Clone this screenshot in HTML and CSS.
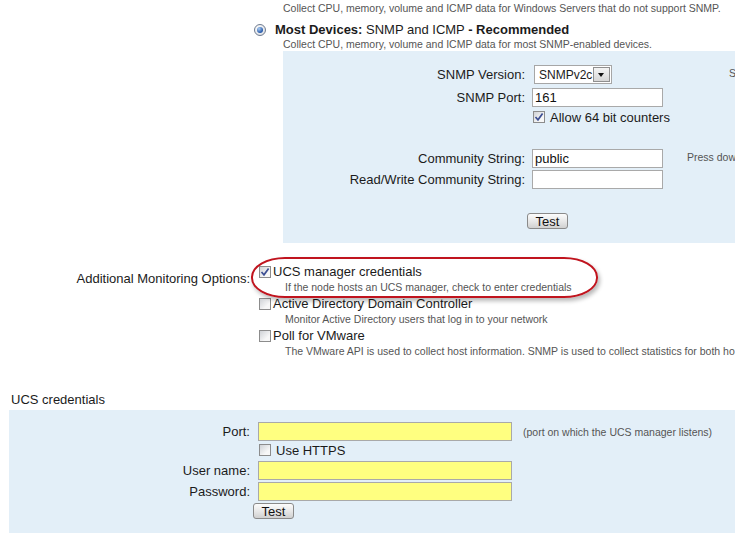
FILE: index.html
```html
<!DOCTYPE html>
<html lang="en">
<head>
  <meta charset="UTF-8">
  <title>Add Node - Polling Method</title>
  <link rel="stylesheet" href="styles.css">
</head>
<body>
  <div class="method">
    <p class="hint top">Collect CPU, memory, volume and ICMP data for Windows Servers that do not support SNMP.</p>
    <div class="radio-row">
      <span class="radio on"></span>
      <span><b>Most Devices:</b> SNMP and ICMP <b>- Recommended</b></span>
    </div>
    <p class="hint sub">Collect CPU, memory, volume and ICMP data for most SNMP-enabled devices.</p>

    <div class="panel snmp">
      <div class="row">
        <span class="lbl">SNMP Version:</span>
        <span class="field">
          <span class="select"><span class="select-text">SNMPv2c</span><span class="select-btn"><i></i></span></span>
        </span>
        <span class="note note-s">S</span>
      </div>
      <div class="row gap4">
        <span class="lbl">SNMP Port:</span>
        <span class="field"><input class="txt" type="text" value="161"></span>
      </div>
      <div class="row gap3 short">
        <span class="lbl"></span>
        <span class="field check-line"><span class="cb on"><svg viewBox="0 0 12 12"><path d="M2.5 6 L5 8.8 L9.6 2.6"/></svg></span>Allow 64 bit counters</span>
      </div>
      <div class="row gap-big">
        <span class="lbl">Community String:</span>
        <span class="field"><input class="txt" type="text" value="public"></span>
        <span class="note note-press">Press dow</span>
      </div>
      <div class="row gap2">
        <span class="lbl">Read/Write Community String:</span>
        <span class="field"><input class="txt" type="text" value=""></span>
      </div>
      <div class="row gap-btn btn-row">
        <span class="lbl"></span>
        <span class="field"><button class="btn shift">Test</button></span>
      </div>
    </div>
  </div>

  <div class="extra">
    <div class="extra-label">Additional Monitoring Options:</div>
    <div class="extra-list">
      <div class="opt"><span class="cb on"><svg viewBox="0 0 12 12"><path d="M2.5 6 L5 8.8 L9.6 2.6"/></svg></span>UCS manager credentials</div>
      <p class="hint opt-hint">If the node hosts an UCS manager, check to enter credentials</p>
      <div class="opt"><span class="cb"></span>Active Directory Domain Controller</div>
      <p class="hint opt-hint">Monitor Active Directory users that log in to your network</p>
      <div class="opt"><span class="cb"></span>Poll for VMware</div>
      <p class="hint opt-hint">The VMware API is used to collect host information. SNMP is used to collect statistics for both ho</p>
    </div>
    <span class="ring"></span>
  </div>

  <h2 class="section-title">UCS credentials</h2>
  <div class="panel ucs">
    <div class="row">
      <span class="lbl">Port:</span>
      <span class="field"><input class="txt yellow" type="text" value=""></span>
      <span class="note note-port">(port on which the UCS manager listens)</span>
    </div>
    <div class="row gap2 short">
      <span class="lbl"></span>
      <span class="field check-line"><span class="cb"></span>Use HTTPS</span>
    </div>
    <div class="row gap4">
      <span class="lbl">User name:</span>
      <span class="field"><input class="txt yellow" type="text" value=""></span>
    </div>
    <div class="row gap2">
      <span class="lbl">Password:</span>
      <span class="field"><input class="txt yellow" type="password" value=""></span>
    </div>
    <div class="row gap2 btn-row">
      <span class="lbl"></span>
      <span class="field"><button class="btn shift">Test</button></span>
    </div>
  </div>
</body>
</html>
```

FILE: styles.css
```css
html, body { margin: 0; padding: 0; }
body { width: 735px; height: 545px; overflow: hidden; background: #fff; color: #1b1b1b; font-family: "Liberation Sans", Arial, sans-serif; font-size: 13px; }
p { margin: 0; }
b { font-weight: bold; }

.hint { font-size: 10.5px; line-height: 12px; color: #555; white-space: nowrap; }

/* polling method */
.method { margin-left: 254px; padding-top: 2px; }
.method > .hint { margin-left: 29px; }
.radio-row { display: flex; align-items: center; gap: 9px; margin-top: 9px; height: 14px; line-height: 14px; font-size: 13px; white-space: nowrap; }
.method > .hint.sub { margin-top: 1px; }

.radio { position: relative; width: 10px; height: 10px; border: 1px solid #6f7b8f; border-radius: 50%; background: radial-gradient(circle at 35% 35%, #ffffff, #d4d8de); flex: none; }
.radio.on::after { content: ""; position: absolute; left: 2px; top: 2px; width: 6px; height: 6px; border-radius: 50%; background: radial-gradient(circle at 35% 30%, #a9cdf5, #2557a8 70%); }

.panel { background: #e3eff8; box-sizing: border-box; }
.panel.snmp { margin-left: 29px; margin-top: 1px; height: 192px; padding-top: 14px; width: 452px; }

.row { display: flex; align-items: center; height: 19px; white-space: nowrap; }
.row.short { height: 14px; }
.row.btn-row { height: 16px; }
.row.gap2 { margin-top: 2px; }
.row.gap3 { margin-top: 3px; }
.row.gap4 { margin-top: 4px; }
.row.gap-big { margin-top: 25px; }
.row.gap-btn { margin-top: 24px; }

.snmp .lbl { width: 242px; margin-right: 7px; text-align: right; flex: none; }
.snmp .field { width: 131px; flex: none; display: flex; align-items: center; }

.txt { box-sizing: border-box; width: 100%; height: 19px; margin: 0; padding: 0 2px; border: 1px solid #a9a9a9; background: #fff; font-family: "Liberation Sans", Arial, sans-serif; font-size: 13px; color: #111; outline: none; }
.txt.yellow { background: #ffff80; }

.select { box-sizing: border-box; display: flex; align-items: center; width: 78px; height: 19px; margin-left: 2px; border: 1px solid #a6a6a6; background: #fff; }
.select-text { padding-left: 4px; font-size: 12px; }
.select-btn { box-sizing: border-box; position: relative; margin-left: auto; margin-right: 1px; width: 17px; height: 15px; border: 1px solid #8f8f8f; background: linear-gradient(#f4f4f4, #d6d6d6); }
.select-btn i { position: absolute; left: 4px; top: 5px; width: 0; height: 0; border-left: 3.5px solid transparent; border-right: 3.5px solid transparent; border-top: 4px solid #111; }

.note { align-self: flex-start; margin-top: 2px; font-size: 10.5px; line-height: 12px; color: #555; }
.note-s { margin-left: 66px; }
.note-press { margin-left: 24px; }

.check-line { gap: 5px; }
.snmp .check-line { margin-left: 1px; }

.cb { box-sizing: border-box; display: inline-block; position: relative; width: 12px; height: 12px; border: 1px solid #8c8c8c; background: linear-gradient(135deg, #cfd2d6, #f7f7f7 70%); flex: none; }
.cb svg { position: absolute; left: -1px; top: -1px; width: 12px; height: 12px; }
.cb svg path { fill: none; stroke: #3d4f93; stroke-width: 1.7; }

.btn { box-sizing: border-box; width: 41px; height: 16px; padding: 0; border: 1px solid #8a8a8a; border-radius: 3px; background: linear-gradient(#fcfcfc, #e6e6e6 55%, #d0d0d0); font-family: "Liberation Sans", Arial, sans-serif; font-size: 13px; line-height: 13px; color: #111; }
.btn.shift { margin-left: -5px; }

/* additional options */
.extra { position: relative; display: flex; margin-top: 21px; }
.extra-label { width: 250px; padding-top: 7px; line-height: 15px; text-align: right; white-space: nowrap; flex: none; }
.extra-list { margin-left: 9px; width: 476px; overflow: hidden; }
.opt { display: flex; align-items: center; gap: 2px; height: 15px; line-height: 15px; white-space: nowrap; }
.opt-hint { margin: 2px 0 0 26px; }
.opt-hint + .opt { margin-top: 3px; }

.ring { position: absolute; left: 251px; top: -7px; width: 347px; height: 41px; box-sizing: border-box; border: 2px solid #c0141e; border-radius: 34px / 20px; box-shadow: 2px 3px 4px rgba(0, 0, 0, 0.28); pointer-events: none; }

/* ucs credentials */
.section-title { margin: 35px 0 0 11px; font-size: 13px; line-height: 15px; font-weight: normal; color: #1b1b1b; }
.panel.ucs { margin: 3px 0 0 9px; height: 123px; padding-top: 12px; }
.ucs .lbl { width: 241px; margin-right: 8px; text-align: right; flex: none; }
.ucs .field { width: 254px; flex: none; display: flex; align-items: center; }
.ucs .check-line { margin-left: 1px; gap: 5px; }
.note-port { align-self: center; margin-top: 0; margin-left: 11px; }
```
